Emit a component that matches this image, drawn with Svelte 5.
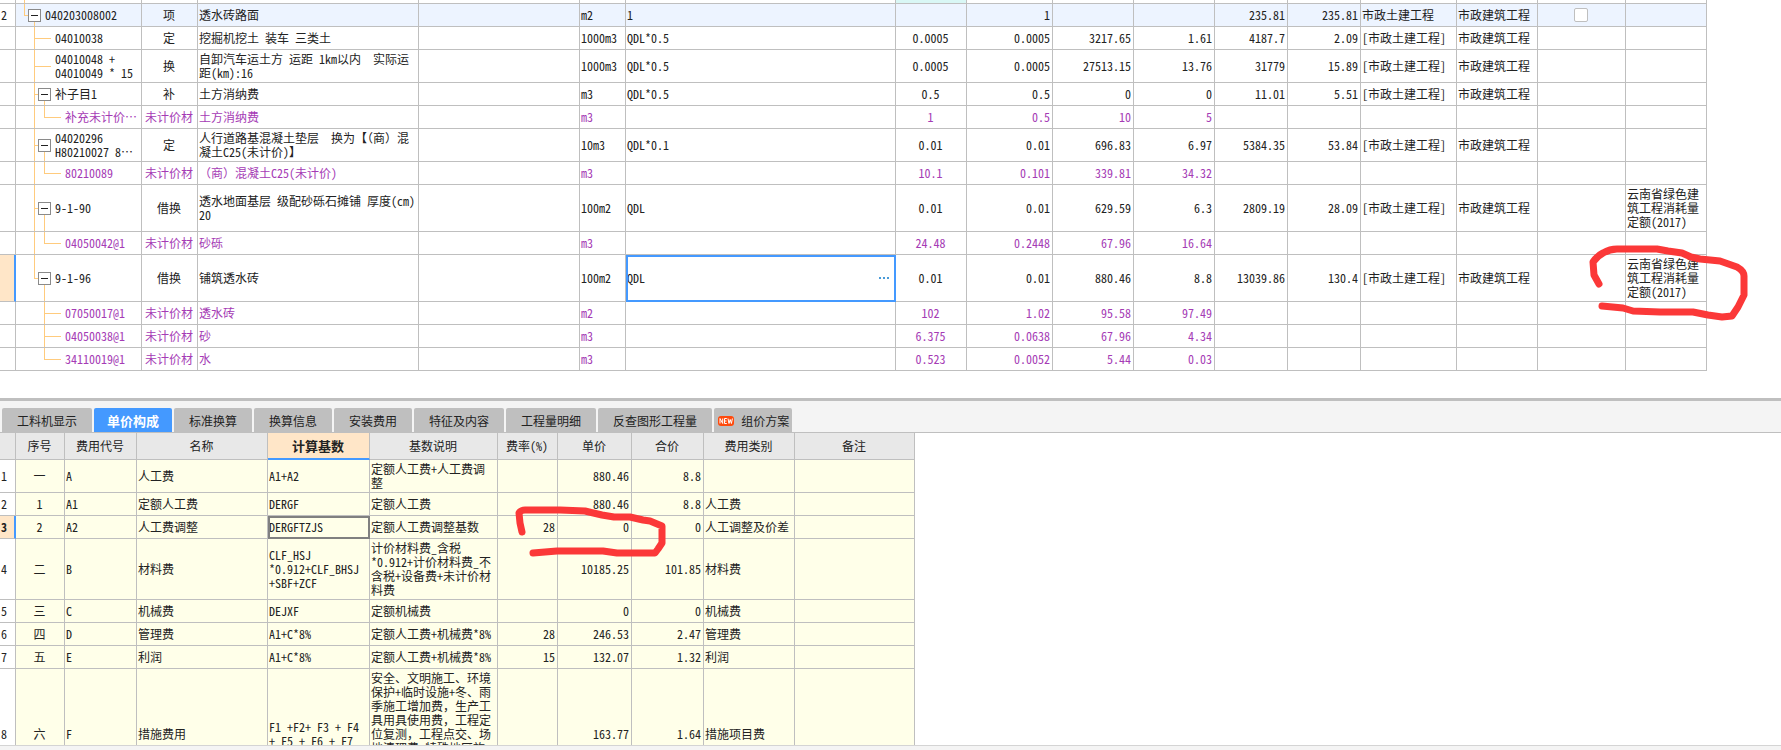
<script lang="ts">
  interface QuotaRow {
    no?: string;
    guides: string[];
    branch?: boolean;
    cells: string[];
    kind?: 'item' | 'material';
    check?: boolean;
    active?: boolean;
  }

  const quotaWidths = [16, 126, 56, 221, 161, 46, 270, 71, 86, 81, 81, 73, 73, 96, 81, 88, 81];
  const quotaAlign = ['', 'center', '', '', '', '', 'center', 'right', 'right', 'right', 'right', 'right', '', '', 'center', ''];

  const CIVIL = '[市政土建工程]';
  const BUILD = '市政建筑工程';
  const YUNNAN = '云南省绿色建\n筑工程消耗量\n定额(2017)';

  // cells: code, type, name, feature, unit, expression, content, quantity, price, total, rate, sum, fee, major, lock, source
  let quotaRows: QuotaRow[] = [
    { no: '2', guides: ['root elbow'], branch: true, kind: 'item', check: true, cells: ['040203008002', '项', '透水砖路面', '', 'm2', '1', '', '1', '', '', '235.81', '235.81', '市政土建工程', BUILD, '', ''] },
    { guides: ['pad', 'tee long'], cells: ['04010038', '定', '挖掘机挖土 装车 三类土', '', '1000m3', 'QDL*0.5', '0.0005', '0.0005', '3217.65', '1.61', '4187.7', '2.09', CIVIL, BUILD, '', ''] },
    { guides: ['pad', 'tee long'], cells: ['04010048 +\n04010049 * 15', '换', '自卸汽车运土方 运距 1km以内  实际运\n距(km):16', '', '1000m3', 'QDL*0.5', '0.0005', '0.0005', '27513.15', '13.76', '31779', '15.89', CIVIL, BUILD, '', ''] },
    { guides: ['pad', 'tee'], branch: true, cells: ['补子目1', '补', '土方消纳费', '', 'm3', 'QDL*0.5', '0.5', '0.5', '0', '0', '11.01', '5.51', CIVIL, BUILD, '', ''] },
    { guides: ['pad', 'pipe', 'elbow long'], kind: 'material', cells: ['补充未计价⋯', '未计价材', '土方消纳费', '', 'm3', '', '1', '0.5', '10', '5', '', '', '', '', '', ''] },
    { guides: ['pad', 'tee'], branch: true, cells: ['04020296\nH80210027 8⋯', '定', '人行道路基混凝土垫层  换为【（商）混\n凝土C25(未计价)】', '', '10m3', 'QDL*0.1', '0.01', '0.01', '696.83', '6.97', '5384.35', '53.84', CIVIL, BUILD, '', ''] },
    { guides: ['pad', 'pipe', 'elbow long'], kind: 'material', cells: ['80210089', '未计价材', '（商）混凝土C25(未计价)', '', 'm3', '', '10.1', '0.101', '339.81', '34.32', '', '', '', '', '', ''] },
    { guides: ['pad', 'tee'], branch: true, cells: ['9-1-90', '借换', '透水地面基层 级配砂砾石摊铺 厚度(cm)\n20', '', '100m2', 'QDL', '0.01', '0.01', '629.59', '6.3', '2809.19', '28.09', CIVIL, BUILD, '', YUNNAN] },
    { guides: ['pad', 'pipe', 'elbow long'], kind: 'material', cells: ['04050042@1', '未计价材', '砂砾', '', 'm3', '', '24.48', '0.2448', '67.96', '16.64', '', '', '', '', '', ''] },
    { guides: ['pad', 'elbow'], branch: true, active: true, cells: ['9-1-96', '借换', '铺筑透水砖', '', '100m2', 'QDL', '0.01', '0.01', '880.46', '8.8', '13039.86', '130.4', CIVIL, BUILD, '', YUNNAN] },
    { guides: ['pad', 'blank', 'tee long'], kind: 'material', cells: ['07050017@1', '未计价材', '透水砖', '', 'm2', '', '102', '1.02', '95.58', '97.49', '', '', '', '', '', ''] },
    { guides: ['pad', 'blank', 'tee long'], kind: 'material', cells: ['04050038@1', '未计价材', '砂', '', 'm3', '', '6.375', '0.0638', '67.96', '4.34', '', '', '', '', '', ''] },
    { guides: ['pad', 'blank', 'elbow long'], kind: 'material', cells: ['34110019@1', '未计价材', '水', '', 'm3', '', '0.523', '0.0052', '5.44', '0.03', '', '', '', '', '', ''] }
  ];

  const tabs = ['工料机显示', '单价构成', '标准换算', '换算信息', '安装费用', '特征及内容', '工程量明细', '反查图形工程量', '组价方案'];
  let activeTab = '单价构成';

  const feeWidths = [16, 49, 72, 131, 102, 128, 60, 74, 72, 91, 120];
  const feeHeads = ['', '序号', '费用代号', '名称', '计算基数', '基数说明', '费率(%)', '单价', '合价', '费用类别', '备注'];
  const feeAlign = ['center', '', '', '', '', 'right', 'right', 'right', '', ''];
  const feeRows = [
    ['一', 'A', '人工费', 'A1+A2', '定额人工费+人工费调\n整', '', '880.46', '8.8', '', ''],
    ['1', 'A1', '定额人工费', 'DERGF', '定额人工费', '', '880.46', '8.8', '人工费', ''],
    ['2', 'A2', '人工费调整', 'DERGFTZJS', '定额人工费调整基数', '28', '0', '0', '人工调整及价差', ''],
    ['二', 'B', '材料费', 'CLF_HSJ\n*0.912+CLF_BHSJ\n+SBF+ZCF', '计价材料费_含税\n*0.912+计价材料费_不\n含税+设备费+未计价材\n料费', '', '10185.25', '101.85', '材料费', ''],
    ['三', 'C', '机械费', 'DEJXF', '定额机械费', '', '0', '0', '机械费', ''],
    ['四', 'D', '管理费', 'A1+C*8%', '定额人工费+机械费*8%', '28', '246.53', '2.47', '管理费', ''],
    ['五', 'E', '利润', 'A1+C*8%', '定额人工费+机械费*8%', '15', '132.07', '1.32', '利润', ''],
    ['六', 'F', '措施费用', 'F1 +F2+ F3 + F4\n+ F5 + F6 + F7', '安全、文明施工、环境\n保护+临时设施+冬、雨\n季施工增加费，生产工\n具用具使用费，工程定\n位复测，工程点交、场\n地清理费+特殊地区施\n工增加费+夜间施工增\n加费+其他措施项目费\n用', '', '163.77', '1.64', '措施项目费', '']
  ];
  let feeRow = 2;
</script>

<main lang="zh-CN">
  <section class="pane quota">
    <table style="width: {quotaWidths.reduce((a, b) => a + b)}px">
      <colgroup>
        {#each quotaWidths as w}<col style="width: {w}px" />{/each}
      </colgroup>
      <tbody>
        <tr class="stub">
          <td></td>
          <td class="code"><div class="tree"><span class="guide root pipe"></span></div></td>
          {#each quotaWidths.slice(2) as _, i}<td class:tint={i === 5}></td>{/each}
        </tr>
        {#each quotaRows as row}
          <tr class={row.kind ?? ''}>
            <td class="no" class:current={row.active}>{row.no ?? ''}</td>
            {#each row.cells as cell, i}
              {#if i === 0}
                <td class="code">
                  <div class="tree">
                    {#each row.guides as g}<span class="guide {g}"></span>{/each}
                    {#if row.branch}
                      <span class="branch">
                        <span class="half"></span>
                        <button class="toggle" aria-label="折叠"></button>
                        <span class="half line"></span>
                      </span>
                    {/if}
                    <span class="label">{cell}</span>
                  </div>
                </td>
              {:else if row.active && i === 5}
                <td class="editing">
                  <div class="editor">
                    <input type="text" aria-label="工程量表达式" bind:value={row.cells[i]} />
                    <button class="more" aria-label="更多">
                      <svg width="10" height="2" viewBox="0 0 10 2"><path d="M0 1h2M4 1h2M8 1h2" stroke="#4a9bd8" stroke-width="2" /></svg>
                    </button>
                  </div>
                </td>
              {:else if row.check && i === 14}
                <td class="center"><input class="check" type="checkbox" aria-label="锁定" /></td>
              {:else}
                <td class={quotaAlign[i]}>{cell}</td>
              {/if}
            {/each}
          </tr>
        {/each}
      </tbody>
    </table>
    <svg class="mark quota-mark" width="160" height="80" viewBox="1589 243 160 80">
      <path d="M1599 284L1594 275L1593 262Q1597 256 1603 253Q1610 249 1617 249L1657 249L1668 251L1682 253L1691 257L1700 259L1720 261L1737 267Q1744 271 1744 276L1744 295L1738 307L1732 316L1722 317L1708 315L1693 312L1660 312L1633 311L1623 308L1602 306" />
    </svg>
  </section>

  <nav class="tabs">
    {#each tabs as tab}
      <button class:active={tab === activeTab} class:fresh={tab === '组价方案'} on:click={() => (activeTab = tab)}>
        {#if tab === '组价方案'}
          <svg width="16" height="10" viewBox="0 0 16 10">
            <rect width="16" height="10" rx="3" fill="#ff4a0c" />
            <path d="M2 7.5V2.5L4.7 7.5V2.5M8.8 2.5H6.5V7.5H8.8M6.5 5H8.5M10 2.5L11 7.5L12.2 3.5L13.4 7.5L14.4 2.5" fill="none" stroke="#fff" />
          </svg>
        {/if}
        {tab}
      </button>
    {/each}
  </nav>

  <section class="pane fees">
    <table style="width: {feeWidths.reduce((a, b) => a + b)}px">
      <colgroup>
        {#each feeWidths as w}<col style="width: {w}px" />{/each}
      </colgroup>
      <thead>
        <tr>
          {#each feeHeads as head, i}<th class:picked={i === 4}>{head}</th>{/each}
        </tr>
      </thead>
      <tbody>
        {#each feeRows as row, r}
          <tr on:click={() => (feeRow = r)}>
            <td class="no" class:current={r === feeRow}>{r + 1}</td>
            {#each row as cell, i}
              <td class={feeAlign[i]} class:focused={r === feeRow && i === 3}>{cell}</td>
            {/each}
          </tr>
        {/each}
      </tbody>
    </table>
    <svg class="mark fees-mark" width="152" height="54" viewBox="515 505 152 54">
      <path d="M522 532L520 523L519 513Q521 510 525 510L560 510L585 511L602 515L614 517L630 517L643 520L650 521L662 526L662 543L658 549L655 553L617 553L603 551L557 551L545 552L533 553" />
    </svg>
  </section>

  <footer></footer>
</main>

<style>
  :global(body) {
    margin: 0;
    background: #fff;
    overflow: hidden;
  }

  main {
    display: flex;
    flex-direction: column;
    height: 100vh;
    color: #222;
    font-family: 'Noto Sans Mono CJK SC', 'Noto Sans CJK SC', monospace;
    font-size: 12px;
    line-height: 14px;
  }

  button,
  input {
    font: inherit;
    color: inherit;
    margin: 0;
    padding: 0;
    border: none;
    background: none;
  }

  .pane {
    position: relative;
    overflow: hidden;
  }

  .quota {
    flex: none;
    padding-bottom: 27px;
  }

  table {
    table-layout: fixed;
    border-collapse: separate;
    border-spacing: 0;
  }

  td,
  th {
    box-sizing: border-box;
    height: 23px;
    padding: 2px 2px 2px 1px;
    border-right: 1px solid #bfbfbf;
    border-bottom: 1px solid #bfbfbf;
    white-space: pre;
    overflow: hidden;
    text-align: left;
    vertical-align: middle;
  }

  .center {
    text-align: center;
  }

  .right {
    text-align: right;
  }

  .stub td {
    height: 4px;
    padding: 0;
  }

  .stub .tint {
    background: #d9f7f5;
  }

  .item td:not(.no) {
    background: #edf4ff;
  }

  .material td {
    color: #a53bb5;
  }

  td.no {
    padding: 0 1px;
  }

  td.current {
    background: #ffe6c8;
    border-right: 2px solid #4499ff;
    font-weight: bold;
  }

  /* code column with tree guides */
  td.code {
    padding: 0;
  }

  .tree {
    display: flex;
    height: 100%;
  }

  .guide {
    flex: none;
    width: 4px;
    margin-bottom: -1px;
    background-repeat: no-repeat;
  }

  .guide.root {
    margin-left: 8px;
  }

  .guide.pad {
    width: 18px;
  }

  .guide.long {
    width: 17px;
  }

  .guide.blank,
  .guide.pipe:not(.root) {
    width: 10px;
  }

  .pipe {
    background-image: linear-gradient(#ffcb7d, #ffcb7d);
    background-size: 1px 100%;
  }

  .tee,
  .elbow {
    background-image: linear-gradient(#ffcb7d, #ffcb7d), linear-gradient(#ffcb7d, #ffcb7d);
    background-position:
      0 0,
      0 50%;
  }

  .tee {
    background-size:
      1px 100%,
      100% 1px;
  }

  .elbow {
    background-size:
      1px 50%,
      100% 1px;
  }

  .branch {
    display: flex;
    flex-direction: column;
    flex: none;
    width: 13px;
    margin-bottom: -1px;
  }

  .half {
    flex: 1;
  }

  .half.line {
    margin-left: 6px;
    border-left: 1px solid #ffcb7d;
  }

  .item .half.line {
    border-color: #ffcb7d;
  }

  .toggle {
    box-sizing: border-box;
    width: 13px;
    height: 13px;
    border: 1px solid #8a8a8a;
    background: linear-gradient(#222, #222) center / 7px 1px no-repeat #fff;
  }

  .label {
    align-self: center;
    margin-left: 4px;
  }

  td.editing {
    padding: 0 2px 0 0;
    outline: 2px solid #4499ff;
    outline-offset: -2px;
    overflow: visible;
  }

  .editor {
    display: flex;
    align-items: center;
  }

  .editor input {
    flex: 1;
    min-width: 0;
    padding: 0 1px;
    outline: none;
  }

  .more {
    display: flex;
    padding: 4px;
  }

  .check {
    appearance: none;
    display: block;
    box-sizing: border-box;
    width: 14px;
    height: 14px;
    margin: 0 auto;
    border: 1px solid #bfbfbf;
    border-radius: 2px;
    background: #fff;
  }

  .tabs {
    display: flex;
    flex: none;
    gap: 2px;
    padding: 7px 2px 0;
    border-top: 3px solid #bfbfbf;
    border-bottom: 1px solid #bfbfbf;
    background: #f4f4f4;
  }

  .tabs button {
    display: flex;
    align-items: center;
    gap: 7px;
    height: 24px;
    padding: 2px 15px 0;
    border-radius: 2px 2px 0 0;
    background: #bfbfbf;
    white-space: nowrap;
  }

  .tabs button.active {
    padding: 2px 13px 0;
    background: #4499ff;
    color: #fff;
    font-size: 13px;
    font-weight: bold;
  }

  .tabs button.fresh {
    padding: 2px 3px 0 4px;
  }

  .fees {
    flex: 1;
    min-height: 0;
  }

  th {
    height: 27px;
    background: #e8e8e8;
    font-weight: normal;
    text-align: center;
  }

  th.picked {
    border-bottom: 2px solid #4499ff;
    background: #ffe6c8;
    font-size: 13px;
    font-weight: bold;
  }

  .fees td:not(.no) {
    background: #ffffe9;
  }

  td.focused {
    outline: 2px solid #808080;
    outline-offset: -2px;
  }

  .mark {
    position: absolute;
    pointer-events: none;
  }

  .mark path {
    fill: none;
    stroke: #fb3838;
    stroke-width: 7;
    stroke-linecap: round;
    stroke-linejoin: round;
  }

  .quota-mark {
    left: 1589px;
    top: 243px;
  }

  .fees-mark {
    left: 515px;
    top: 72px;
  }

  footer {
    flex: none;
    height: 4px;
    border-top: 1px solid #d4d4d4;
    background: #f4f4f4;
  }
</style>
